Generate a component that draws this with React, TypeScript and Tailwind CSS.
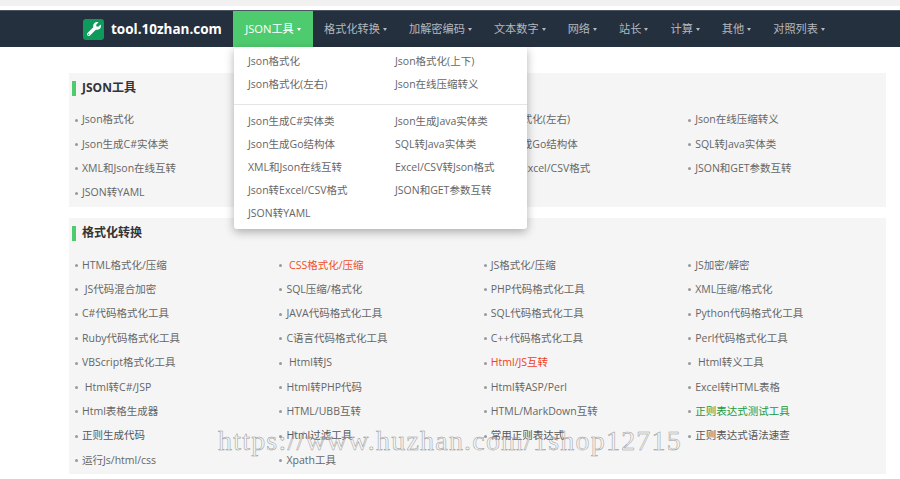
import { FaWrench } from 'react-icons/fa'

type Tool = { name: string; color?: string }

const navItems = ['格式化转换', '加解密编码', '文本数字', '网络', '站长', '计算', '其他', '对照列表']

const menuTop = ['Json格式化', 'Json格式化(上下)', 'Json格式化(左右)', 'Json在线压缩转义']
const menuBottom = [
  'Json生成C#实体类',
  'Json生成Java实体类',
  'Json生成Go结构体',
  'SQL转Java实体类',
  'XML和Json在线互转',
  'Excel/CSV转Json格式',
  'Json转Excel/CSV格式',
  'JSON和GET参数互转',
  'JSON转YAML',
]

const jsonTools: Tool[] = [...menuTop, ...menuBottom].map((name) => ({ name }))

const formatTools: Tool[] = [
  { name: 'HTML格式化/压缩' },
  { name: '\u00a0CSS格式化/压缩', color: 'text-[#f0501e]' },
  { name: 'JS格式化/压缩' },
  { name: 'JS加密/解密' },
  { name: '\u00a0JS代码混合加密' },
  { name: 'SQL压缩/格式化' },
  { name: 'PHP代码格式化工具' },
  { name: 'XML压缩/格式化' },
  { name: 'C#代码格式化工具' },
  { name: 'JAVA代码格式化工具' },
  { name: 'SQL代码格式化工具' },
  { name: 'Python代码格式化工具' },
  { name: 'Ruby代码格式化工具' },
  { name: 'C语言代码格式化工具' },
  { name: 'C++代码格式化工具' },
  { name: 'Perl代码格式化工具' },
  { name: 'VBScript格式化工具' },
  { name: '\u00a0Html转JS' },
  { name: 'Html/JS互转', color: 'text-[#f0401e]' },
  { name: '\u00a0Html转义工具' },
  { name: '\u00a0Html转C#/JSP' },
  { name: 'Html转PHP代码' },
  { name: 'Html转ASP/Perl' },
  { name: 'Excel转HTML表格' },
  { name: 'Html表格生成器' },
  { name: 'HTML/UBB互转' },
  { name: 'HTML/MarkDown互转' },
  { name: '正则表达式测试工具', color: 'text-[#16993c]' },
  { name: '正则生成代码', color: 'text-[#555]' },
  { name: 'Html过滤工具', color: 'text-[#555]' },
  { name: '常用正则表达式', color: 'text-[#555]' },
  { name: '正则表达式语法速查', color: 'text-[#555]' },
  { name: '运行Js/html/css' },
  { name: 'Xpath工具' },
]

function Caret() {
  return <span className="ml-[3px] inline-block align-middle border-x-[2.5px] border-t-[3px] border-x-transparent border-t-current" />
}

function Section({ title, tools }: { title: string; tools: Tool[] }) {
  return (
    <section className="bg-[#f5f5f5] pb-[1px]">
      <h2 className="flex h-[30px] items-center pl-[3px] text-[12px] font-bold text-[#333]">
        <span className="mr-[6px] h-[15px] w-[4px] bg-[#4fcb6f]" />
        {title}
      </h2>
      <ul className="mt-[5px] grid grid-cols-[repeat(4,204.4px)] auto-rows-[24.4px] pl-[6px]">
        {tools.map((tool) => (
          <li key={tool.name} className={'flex items-center text-[10.5px] ' + (tool.color ?? 'text-[#666]')}>
            <span className="mr-[4px] h-[3px] w-[3px] shrink-0 rounded-full bg-[#999]" />
            {tool.name}
          </li>
        ))}
      </ul>
    </section>
  )
}

export default function App() {
  return (
    <div className="relative h-[479px] w-[900px] overflow-hidden bg-white font-['Open_Sans','Noto_Sans_CJK_SC',sans-serif]">
      <div className="h-[6px] bg-[#f1f1f1]" />
      <div className="h-[4px]" />

      <nav className="flex h-[37px] items-stretch border-t border-[#4a5563] bg-[#25303f] pl-[83px] text-[11.2px] text-[#b4b8bd]">
        <a className="mr-[11px] flex w-[139px] items-center gap-[7px] whitespace-nowrap text-[13.5px] font-bold text-white">
          <span className="flex h-[21px] w-[21px] shrink-0 items-center justify-center rounded-[3px] bg-[#0f9a5c]">
            <FaWrench className="h-[14px] w-[14px]" />
          </span>
          tool.10zhan.com
        </a>
        <div className="relative flex w-[80px] items-center justify-center bg-[#4fcb6f] text-white">
          JSON工具
          <Caret />
          <div className="absolute left-[1px] top-[36px] z-10 h-[182px] w-[293px] rounded-b-[3px] bg-white text-[10.5px] text-[#666] shadow-[0_3px_10px_rgba(0,0,0,0.3)]">
            <ul className="grid grid-cols-[147px_146px] auto-rows-[23px] pl-[14px] pt-[3px]">
              {menuTop.map((name) => (
                <li key={name} className="flex items-center">{name}</li>
              ))}
            </ul>
            <div className="mb-[5px] mt-[8px] h-px bg-[#e5e5e5]" />
            <ul className="grid grid-cols-[147px_146px] auto-rows-[23px] pl-[14px]">
              {menuBottom.map((name) => (
                <li key={name} className="flex items-center">{name}</li>
              ))}
            </ul>
          </div>
        </div>
        {navItems.map((item) => (
          <a key={item} className="flex items-center px-[11px]">
            {item}
            <Caret />
          </a>
        ))}
      </nav>

      <main className="ml-[69px] mt-[26px] flex w-[817px] flex-col gap-[11.8px]">
        <Section title="JSON工具" tools={jsonTools} />
        <Section title="格式化转换" tools={formatTools} />
      </main>

      <div className="pointer-events-none absolute left-[218px] top-[420px] z-20 whitespace-nowrap font-['Liberation_Serif',serif] text-[28px] tracking-[1.2px] text-transparent [-webkit-text-stroke:0.5px_#999]">
        https://www.huzhan.com/1shop12715
      </div>
    </div>
  )
}
